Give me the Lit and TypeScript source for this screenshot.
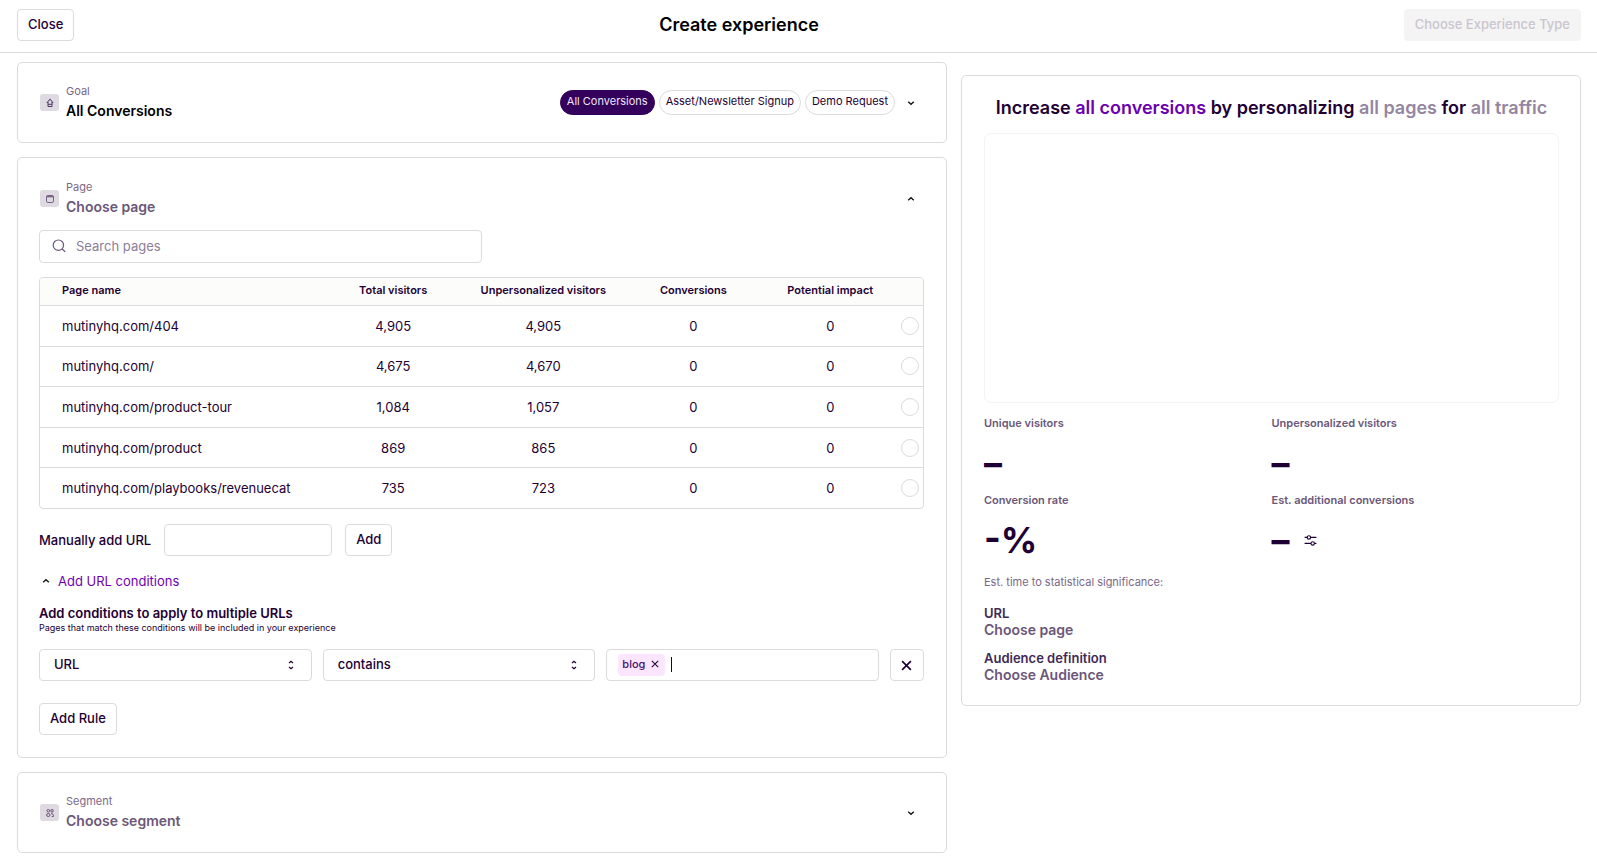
import { LitElement, html, css, svg } from "lit";
import { customElement, property } from "lit/decorators.js";

const chevron = (up: boolean) => html`<svg width="8" height="8" viewBox="0 0 8 8" fill="none" stroke="#111" stroke-width="1.3" aria-hidden="true">
  <path d=${up ? "M1.2 5.3 L4 2.7 L6.8 5.3" : "M1.2 2.7 L4 5.3 L6.8 2.7"} />
</svg>`;

const cross = (size: number, width: number) => html`<svg width=${size} height=${size} viewBox="0 0 10 10" fill="none" stroke="#1e0035" stroke-width=${width} aria-hidden="true">
  <path d="M1 1 L9 9 M9 1 L1 9" />
</svg>`;

const glyphs = {
  goal: svg`<g stroke="#3f2a55"><path d="M3 8.5V3.9C3 1.3 7 1.3 7 3.9V8.5H3M3 6.3H7M5 .8V2M1.7 4.4H3M7 4.4H8.3"/></g>`,
  page: svg`<g stroke="#6b5779"><rect x="1.5" y="1.5" width="7" height="7" rx="1.4"/><path d="M1.6 2.7H8.4" stroke-width="1.2"/></g>`,
  segment: svg`<g stroke="#5a4669"><circle cx="3.3" cy="2.8" r="1.3"/><circle cx="7" cy="2.8" r="1.3"/><ellipse cx="3.3" cy="7" rx="1.7" ry="1.5"/><path d="M6 5.7C8 5.2 8.4 6.6 8.4 8.5H6.8"/></g>`,
};

@customElement("card-heading")
class CardHeading extends LitElement {
  @property() icon: keyof typeof glyphs = "goal";
  @property() label = "";
  @property() heading = "";
  @property({ type: Boolean }) chosen = false;
  @property({ type: Boolean }) open = false;

  static styles = css`
    :host { display: flex; align-items: center; padding-left: 1px; }
    .badge { flex: none; display: grid; place-items: center; width: 19px; height: 17px; border-radius: 3px; background: #dfd9e1; }
    .text { flex: 1; display: flex; flex-direction: column; margin-left: 7px; }
    .label { font-size: 11px; line-height: 16px; color: #7a6888; }
    .heading { margin: 0; font-size: 14px; line-height: 23px; font-weight: 600; color: #6b5779; }
    .chosen { color: #000; }
    .toggle { display: grid; place-items: center; width: 26px; height: 26px; padding: 0; border: 0; background: none; }
    .extra { display: flex; gap: 4px; margin-right: 3px; }
  `;

  render() {
    return html`
      <span class="badge"><svg width="10" height="10" viewBox="0 0 10 10" fill="none" stroke-width=".9" aria-hidden="true">${glyphs[this.icon]}</svg></span>
      <div class="text">
        <span class="label">${this.label}</span>
        <h2 class="heading ${this.chosen ? "chosen" : ""}">${this.heading}</h2>
      </div>
      <div class="extra"><slot></slot></div>
      <button class="toggle" aria-label="Toggle ${this.label}" aria-expanded=${this.open}>${chevron(this.open)}</button>
    `;
  }
}

const pages = [
  ["mutinyhq.com/404", "4,905", "4,905", "0", "0"],
  ["mutinyhq.com/", "4,675", "4,670", "0", "0"],
  ["mutinyhq.com/product-tour", "1,084", "1,057", "0", "0"],
  ["mutinyhq.com/product", "869", "865", "0", "0"],
  ["mutinyhq.com/playbooks/revenuecat", "735", "723", "0", "0"],
];

@customElement("app-root")
class AppRoot extends LitElement {
  static styles = css`
    :host { display: block; font-family: Inter, sans-serif; font-size: 13px; line-height: 16px; color: #1e0035; background: #fff; }
    * { box-sizing: border-box; }
    button, input, select { font: inherit; color: inherit; }

    .topbar { display: flex; justify-content: space-between; align-items: center; padding: 9px 16px 11px 17px; border-bottom: 1px solid #dfd9e1; }
    .title { margin: 0; font-size: 18px; line-height: 24px; font-weight: 600; color: #000; }
    .btn { height: 32px; padding: 0 10px 2px; border: 1px solid #dcdadd; border-radius: 4px; background: #fff; font-weight: 500; white-space: nowrap; }
    .btn:disabled { background: #f4f4f4; border-color: #f4f4f4; color: #cbc5cf; }

    .columns { display: grid; grid-template-columns: 3fr 2fr; gap: 14px; align-items: start; padding: 9px 16px 9px 17px; }
    .stack { display: grid; gap: 14px; min-width: 0; }
    .card { min-width: 0; border: 1px solid #dcdadd; border-radius: 5px; background: #fff; padding: 20px 22px 20px 21px; }
    .page-card { padding-top: 21px; padding-bottom: 22px; }

    .pill { height: 25px; padding: 0 6px 3px; border: 1px solid #dcdadd; border-radius: 13px; background: #fff; font-size: 11px; white-space: nowrap; }
    .pill-on { background: #33005c; border-color: #33005c; color: #efe6f7; }

    .search { display: flex; align-items: center; gap: 10px; width: 50%; height: 33px; margin-top: 12px; padding: 0 12px 1px; border: 1px solid #dcdadd; border-radius: 4px; }
    .bare { flex: 1; min-width: 0; padding: 0; border: 0; outline: 0; background: none; }
    .bare::placeholder { color: #8c7d98; opacity: 1; }

    .table-box { margin-top: 14px; border: 1px solid #dcdadd; border-radius: 4px; overflow: hidden; }
    .table { width: 100%; height: 230px; table-layout: fixed; border-collapse: separate; border-spacing: 0; text-align: center; }
    .table th { height: 27px; padding: 0 0 4px; background: #fcfcfb; font-size: 11px; font-weight: 600; }
    .table td { padding: 0; border-top: 1px solid #dcdadd; }
    .table .name { width: 31.5%; padding-left: 22px; text-align: left; }
    .num { width: 17%; }
    .impact { width: 14%; }
    .pick { width: 3.5%; }
    .radio { display: block; appearance: none; width: 18px; height: 18px; margin: 0 auto 0 9px; border: 1px solid #dcdadd; border-radius: 50%; }
    .radio:checked { border: 5px solid #6a00b0; }

    .manual { display: flex; align-items: center; gap: 13px; margin-top: 15px; font-weight: 500; }
    .field { width: 168px; height: 32px; padding: 0 10px; border: 1px solid #dcdadd; border-radius: 4px; }
    .disclosure { display: flex; align-items: center; gap: 8px; margin-top: 17px; padding: 0 0 0 3px; border: 0; background: none; color: #6f00b3; }
    .rule-title { margin: 15px 0 0; font-size: 13px; line-height: 18px; font-weight: 600; }
    .hint { margin: 0; font-size: 9px; line-height: 12px; }
    .rule { display: grid; grid-template-columns: repeat(3, minmax(0, 1fr)) 34px; gap: 11px; margin: 15px 0 22px; }
    .select-wrap { display: grid; align-items: center; }
    .select-wrap > * { grid-area: 1 / 1; }
    .select { appearance: none; width: 100%; height: 32px; padding: 0 14px 2px; border: 1px solid #dcdadd; border-radius: 4px; background: #fff; font-weight: 500; }
    .arrows { justify-self: end; margin-right: 17px; pointer-events: none; }
    .tags { display: flex; align-items: center; height: 32px; padding: 0 11px 1px; border: 1px solid #dcdadd; border-radius: 4px; }
    .tag { display: flex; align-items: center; gap: 6px; height: 22px; padding: 0 6px 2px 4px; border-radius: 4px; background: #fce6ff; font-size: 11px; font-weight: 500; color: #45106e; }
    .tag-x { display: flex; padding: 0; border: 0; background: none; }
    .caret { width: 1px; height: 15px; margin-left: 6px; background: #1e0035; }
    .square { display: grid; place-items: center; height: 32px; padding: 0; border: 1px solid #dcdadd; border-radius: 4px; background: #fff; }

    .summary { margin-top: 13px; padding: 20px 21px 21px 22px; }
    .pitch { margin: 0; font-size: 18px; line-height: 24px; font-weight: 600; text-align: center; }
    .goal { color: #6a00b0; }
    .muted { color: #9486a0; }
    .preview { height: 270px; margin-top: 13px; border: 1px solid #f4f3f5; border-radius: 7px; }
    .stats { display: grid; grid-template-columns: 1fr 1fr; row-gap: 7px; margin: 12px 0 0; }
    .stat-label { font-size: 11px; line-height: 16px; font-weight: 600; color: #6b5779; }
    .stat-value { display: flex; align-items: center; gap: 14px; margin: 10px 0 0; font-size: 36px; line-height: 44px; font-weight: 700; }
    .tune { display: flex; padding: 0; border: 0; background: none; }
    .time { margin: 12px 0 15px; font-size: 11px; color: #7a6888; }
    .facts { margin: 0; }
    .fact-label { line-height: 16px; font-weight: 600; color: #3f2a55; }
    .fact-value { margin: 0 0 11px; font-size: 14px; line-height: 18px; font-weight: 600; color: #6b5779; }
    .fact-value:last-child { margin-bottom: 0; }
  `;

  private select(label: string, value: string) {
    return html`<div class="select-wrap">
      <select class="select" aria-label=${label}><option>${value}</option></select>
      <svg class="arrows" width="8" height="10" viewBox="0 0 8 10" fill="none" stroke="#1e0035" stroke-width="1.2" aria-hidden="true">
        <path d="M2 3 L4 1.2 L6 3 M2 7 L4 8.8 L6 7" />
      </svg>
    </div>`;
  }

  private stat(label: string, value: string, extra: unknown = "") {
    return html`<div><dt class="stat-label">${label}</dt><dd class="stat-value">${value}${extra}</dd></div>`;
  }

  render() {
    return html`
      <header class="topbar">
        <button class="btn">Close</button>
        <h1 class="title">Create experience</h1>
        <button class="btn" disabled>Choose Experience Type</button>
      </header>
      <main class="columns">
        <div class="stack">
          <section class="card">
            <card-heading icon="goal" label="Goal" heading="All Conversions" chosen>
              <button class="pill pill-on">All Conversions</button>
              <button class="pill">Asset/Newsletter Signup</button>
              <button class="pill">Demo Request</button>
            </card-heading>
          </section>

          <section class="card page-card">
            <card-heading icon="page" label="Page" heading="Choose page" open></card-heading>
            <label class="search">
              <svg width="14" height="14" viewBox="0 0 14 14" fill="none" stroke="#6b5779" stroke-width="1.2" aria-hidden="true">
                <circle cx="6.4" cy="6.2" r="5.2" /><path d="M10.2 10 L13.2 12.8" />
              </svg>
              <input class="bare" type="text" placeholder="Search pages" aria-label="Search pages" />
            </label>
            <div class="table-box">
              <table class="table">
                <thead>
                  <tr>
                    <th class="name">Page name</th>
                    <th class="num">Total visitors</th>
                    <th class="num">Unpersonalized visitors</th>
                    <th class="num">Conversions</th>
                    <th class="impact">Potential impact</th>
                    <th class="pick"></th>
                  </tr>
                </thead>
                <tbody>
                  ${pages.map(([name, ...values]) => html`<tr>
                    <td class="name">${name}</td>
                    ${values.map((v) => html`<td>${v}</td>`)}
                    <td><input class="radio" type="radio" name="page" aria-label=${name} /></td>
                  </tr>`)}
                </tbody>
              </table>
            </div>
            <div class="manual">
              <label for="manual-url">Manually add URL</label>
              <input class="field" id="manual-url" type="text" />
              <button class="btn">Add</button>
            </div>
            <button class="disclosure" aria-expanded="true">${chevron(true)}Add URL conditions</button>
            <h3 class="rule-title">Add conditions to apply to multiple URLs</h3>
            <p class="hint">Pages that match these conditions will be included in your experience</p>
            <div class="rule">
              ${this.select("Attribute", "URL")}
              ${this.select("Operator", "contains")}
              <div class="tags">
                <span class="tag">blog<button class="tag-x" aria-label="Remove blog">${cross(8, 1.3)}</button></span>
                <span class="caret"></span>
                <input class="bare" type="text" aria-label="Value" />
              </div>
              <button class="square" aria-label="Remove rule">${cross(11, 1.5)}</button>
            </div>
            <button class="btn">Add Rule</button>
          </section>

          <section class="card">
            <card-heading icon="segment" label="Segment" heading="Choose segment"></card-heading>
          </section>
        </div>

        <aside class="card summary">
          <h2 class="pitch">Increase <span class="goal">all conversions</span> by personalizing <span class="muted">all pages</span> for <span class="muted">all traffic</span></h2>
          <div class="preview"></div>
          <dl class="stats">
            ${this.stat("Unique visitors", "–")}
            ${this.stat("Unpersonalized visitors", "–")}
            ${this.stat("Conversion rate", "-%")}
            ${this.stat("Est. additional conversions", "–", html`<button class="tune" aria-label="Adjust estimate">
              <svg width="13" height="13" viewBox="0 0 13 13" fill="none" stroke="#1e0035" stroke-width="1.1" aria-hidden="true">
                <circle cx="4.9" cy="3.4" r="1.7" /><circle cx="8.7" cy="9.4" r="1.7" />
                <path d="M.6 3.4H3.2M6.6 3.4H12.4M.6 9.4H7M10.4 9.4H12.4" />
              </svg></button>`)}
          </dl>
          <p class="time">Est. time to statistical significance:</p>
          <dl class="facts">
            <dt class="fact-label">URL</dt>
            <dd class="fact-value">Choose page</dd>
            <dt class="fact-label">Audience definition</dt>
            <dd class="fact-value">Choose Audience</dd>
          </dl>
        </aside>
      </main>
    `;
  }
}
